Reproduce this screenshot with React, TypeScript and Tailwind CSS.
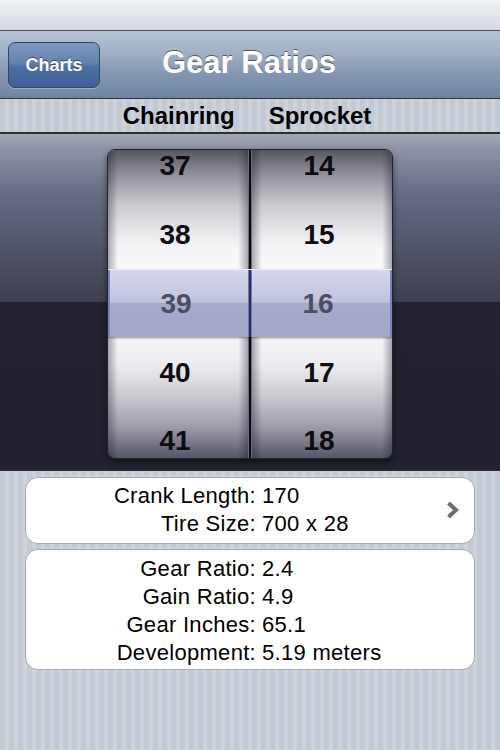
const wheelBg =
  "bg-[linear-gradient(to_bottom,#56565f_0%,#8a8a93_7%,#cbcbd0_18%,#f3f3f5_30%,#fbfbfc_40%,#f4f4f7_62%,#ececf0_70%,#c9c9cf_80%,#9c9ca6_90%,#55556a_100%)]";

const rows = {
  left: ["37", "38", "39", "40", "41"],
  right: ["14", "15", "16", "17", "18"],
};

function WheelColumn({ items, width }: { items: string[]; width: string }) {
  return (
    <div className={`relative ${width} h-full overflow-hidden ${wheelBg}`}>
      <div className="flex flex-col -mt-[19px]">
        {items.map((n, i) => (
          <div
            key={n}
            className={
              i === items.length - 1
                ? "h-[50px] flex items-start justify-center pt-[20px] pr-[6px] text-[28px] leading-none font-bold text-[#0c0c12]"
                : "h-[69px] flex items-center justify-center pr-[6px] text-[28px] leading-none font-bold text-[#0c0c12]"
            }
          >
            {n}
          </div>
        ))}
      </div>
      {/* side shading of the drum */}
      <div className="absolute inset-0 pointer-events-none bg-[linear-gradient(to_right,rgba(20,20,40,0.35)_0%,rgba(0,0,0,0)_7%,rgba(0,0,0,0)_93%,rgba(20,20,40,0.35)_100%)]" />
    </div>
  );
}

function InfoRow({ label, value }: { label: string; value: string }) {
  return (
    <div className="flex h-[28px] items-center">
      <div className="w-[230px] text-right">{label}</div>
      <div className="pl-[6px]">{value}</div>
    </div>
  );
}

export default function App() {
  return (
    <div className="w-[500px] h-[750px] flex flex-col overflow-hidden font-['Liberation_Sans',Arial,sans-serif]">
      {/* Status bar */}
      <div className="h-[31px] bg-[linear-gradient(to_bottom,#f1f3f5,#d3d8dd)] border-b border-[#4d5562]" />

      {/* Navigation bar */}
      <div className="h-[68px] relative flex items-center justify-center bg-[linear-gradient(to_bottom,#b8c3d2_0%,#9eaec4_35%,#8799b3_60%,#6d84a3_100%)] border-b border-[#2f3744]">
        <button className="absolute left-[8px] top-[11px] w-[92px] h-[46px] rounded-[7px] border border-[#34465f] bg-[linear-gradient(to_bottom,#7e98c0_0%,#6482b0_45%,#4d6ea1_55%,#3f6197_100%)] text-white text-[18px] font-bold [text-shadow:0_-1px_0_rgba(0,0,0,0.45)] shadow-[0_1px_0_rgba(255,255,255,0.3)]">
          Charts
        </button>
        <h1 className="text-white text-[31px] font-bold [text-shadow:0_-1px_0_rgba(0,0,0,0.5)] -ml-[2px] -mt-[2px]">Gear Ratios</h1>
      </div>

      {/* Column headings */}
      <div className="h-[35px] flex items-center justify-center gap-[34px] bg-[repeating-linear-gradient(90deg,#c3cad3_0px,#c3cad3_5px,#ccd3db_5px,#ccd3db_9px)] border-b-2 border-[#2b2f38] text-[24px] font-bold text-black">
        <span className="-ml-[6px]">Chainring</span>
        <span>Sprocket</span>
      </div>

      {/* Picker */}
      <div className="h-[336px] pt-[15px] bg-[linear-gradient(to_bottom,#a3a8b7_0px,#9197a9_12px,#646b84_60px,#4a4e60_130px,#3e404f_168px,#22232f_168px,#21222e_100%)]">
        <div className="relative w-[286px] h-[310px] mx-auto flex rounded-[8px] overflow-hidden border border-[#23232c] shadow-[0_3px_6px_rgba(0,0,0,0.5)]">
          <WheelColumn items={rows.left} width="w-[140px]" />
          <div className="w-[4px] h-full bg-[#0a0a0e] border-x border-[#6c6c7e]" />
          <WheelColumn items={rows.right} width="w-[140px]" />

          {/* Selection band */}
          <div className="absolute left-0 right-0 top-[119px] h-[68px] flex border-t border-[#eef0f8] bg-[linear-gradient(to_bottom,#d6d9ec_0%,#bfc3dd_48%,#a6aacb_50%,#a2a6c7_100%)] shadow-[0_1px_2px_rgba(0,0,0,0.4)]">
            <div className="w-[140px] flex items-center justify-center pr-[6px] text-[28px] leading-none font-bold text-[#4c4e60] border-l-2 border-[#7a82c2]">39</div>
            <div className="w-[4px] bg-[#2d3150] border-x border-[#7078c0]" />
            <div className="w-[140px] flex items-center justify-center pr-[6px] text-[28px] leading-none font-bold text-[#4c4e60] border-r-2 border-[#7a82c2]">16</div>
          </div>
        </div>
      </div>

      {/* Info */}
      <div className="flex-1 flex flex-col gap-[5px] px-[25px] pt-[6px] border-t border-[#2a2c36] bg-[repeating-linear-gradient(90deg,#c3cad3_0px,#c3cad3_5px,#ccd3db_5px,#ccd3db_9px)] text-[22px] text-black tracking-[0.3px]">
        <div className="relative h-[67px] pt-[3px] rounded-[13px] bg-white border border-[#a6abb2]">
          <InfoRow label="Crank Length:" value="170" />
          <InfoRow label="Tire Size:" value="700 x 28" />
          <svg className="absolute right-[14px] top-[22px]" width="15" height="20" viewBox="0 0 15 20">
            <polyline points="3.5,3 11,10 3.5,17" fill="none" stroke="#6d6d6d" strokeWidth="4" />
          </svg>
        </div>
        <div className="h-[121px] pt-[4px] rounded-[13px] bg-white border border-[#a6abb2]">
          <InfoRow label="Gear Ratio:" value="2.4" />
          <InfoRow label="Gain Ratio:" value="4.9" />
          <InfoRow label="Gear Inches:" value="65.1" />
          <InfoRow label="Development:" value="5.19 meters" />
        </div>
      </div>
    </div>
  );
}
